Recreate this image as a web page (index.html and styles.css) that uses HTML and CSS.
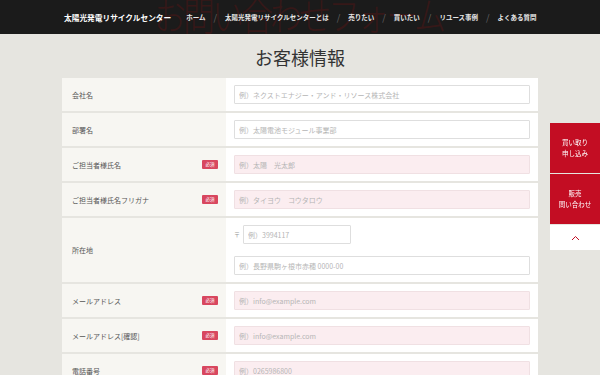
FILE: index.html
```html
<!DOCTYPE html>
<html lang="ja">
<head>
    <meta charset="UTF-8">
    <meta name="viewport" content="width=device-width, initial-scale=1.0">
    <title>お問い合わせフォーム | 太陽光発電リサイクルセンター</title>
    <link rel="stylesheet" href="styles.css">
</head>
<body>
    <div class="Header">
        <div class="bigtitle">お問い合わせフォーム</div>
        <div class="logo">太陽光発電リサイクルセンター</div>
        <ul class="nav">
            <li><a href="#">ホーム</a></li>
            <li class="sep">/</li>
            <li><a href="#">太陽光発電リサイクルセンターとは</a></li>
            <li class="sep">/</li>
            <li><a href="#">売りたい</a></li>
            <li class="sep">/</li>
            <li><a href="#">買いたい</a></li>
            <li class="sep">/</li>
            <li><a href="#">リユース事例</a></li>
            <li class="sep">/</li>
            <li><a href="#">よくある質問</a></li>
        </ul>
    </div>

    <h2 class="ttl">お客様情報</h2>

    <div class="form">
        <div class="row">
            <div class="lbl">会社名</div>
            <div class="cell"><input type="text" placeholder="例）ネクストエナジー・アンド・リソース株式会社"></div>
        </div>
        <div class="row">
            <div class="lbl">部署名</div>
            <div class="cell"><input type="text" placeholder="例）太陽電池モジュール事業部"></div>
        </div>
        <div class="row">
            <div class="lbl">ご担当者様氏名<span class="must">必須</span></div>
            <div class="cell"><input type="text" class="req" placeholder="例）太陽　光太郎"></div>
        </div>
        <div class="row">
            <div class="lbl">ご担当者様氏名フリガナ<span class="must">必須</span></div>
            <div class="cell"><input type="text" class="req" placeholder="例）タイヨウ　コウタロウ"></div>
        </div>
        <div class="row">
            <div class="lbl">所在地</div>
            <div class="cell cell-addr">
                <div class="zip"><span class="yubin">〒</span><input type="text" class="zipin" placeholder="例）3994117"></div>
                <input type="text" placeholder="例）長野県駒ヶ根市赤穂 0000-00">
            </div>
        </div>
        <div class="row">
            <div class="lbl">メールアドレス<span class="must">必須</span></div>
            <div class="cell"><input type="text" class="req" placeholder="例）info@example.com"></div>
        </div>
        <div class="row">
            <div class="lbl">メールアドレス[確認]<span class="must">必須</span></div>
            <div class="cell"><input type="text" class="req" placeholder="例）info@example.com"></div>
        </div>
        <div class="row">
            <div class="lbl">電話番号<span class="must">必須</span></div>
            <div class="cell"><input type="text" class="req" placeholder="例）0265986800"></div>
        </div>
    </div>

    <div class="side">
        <a href="#" class="side-btn">買い取り<br>申し込み</a>
        <a href="#" class="side-btn">販売<br>問い合わせ</a>
        <a href="#" class="side-top">
            <svg width="9" height="6" viewBox="0 0 9 6"><path d="M1 5 L4.5 1.5 L8 5" fill="none" stroke="#c30d23" stroke-width="1"/></svg>
        </a>
    </div>
</body>
</html>
```

FILE: styles.css
```css
body{
    margin: 0;
    background-color: #e6e5e0;
    font-family: "Open Sans", "Noto Sans CJK JP", sans-serif;
    color: #444;
}
.Header{
    position: relative;
    height: 34px;
    background-color: #1b1b1b;
    display: flex;
    align-items: center;
    padding-left: 64px;
    overflow: hidden;
}
/* 背景の大きい見出し */
.bigtitle{
    position: absolute;
    left: 154px;
    top: 0;
    font-family: "Noto Sans CJK JP", serif;
    font-weight: 300;
    font-size: 32px;
    line-height: 32px;
    letter-spacing: -3px;
    color: #361818;
    white-space: nowrap;
    transform: scaleY(1.2);
    transform-origin: left bottom;
}
.logo{
    position: relative;
    font-family: "Noto Sans CJK JP", sans-serif;
    font-size: 7.7px;
    font-weight: bold;
    color: #fff;
    white-space: nowrap;
}
.nav{
    position: relative;
    list-style: none;
    margin: 0 0 0 15px;
    padding: 0;
    display: flex;
    align-items: center;
    font-family: "Noto Sans CJK JP", sans-serif;
    font-size: 6.5px;
    font-weight: bold;
    white-space: nowrap;
}
.nav a{
    color: #e8e8e8;
    text-decoration: none;
}
.nav .sep{
    color: #666;
    font-size: 9px;
    font-weight: normal;
    margin: 0 8px;
}
.ttl{
    margin: 0;
    padding: 11px 0 9px;
    text-align: center;
    font-family: "Noto Sans CJK JP", sans-serif;
    font-weight: normal;
    font-size: 18px;
    line-height: 24px;
    color: #333;
}
.form{
    width: 476px;
    margin: 0 auto;
}
.row{
    display: flex;
    margin-bottom: 2px;
    background: #fff;
}
.lbl{
    width: 146px;
    flex: none;
    display: flex;
    align-items: center;
    justify-content: space-between;
    padding: 0 8px 0 10px;
    background: #f7f6f2;
    font-family: "Noto Sans CJK JP", sans-serif;
    font-size: 7px;
    color: #555;
}
.must{
    display: inline-block;
    width: 16px;
    height: 9px;
    line-height: 9px;
    text-align: center;
    background: #d8475f;
    color: #fff;
    font-size: 4.5px;
    border-radius: 1px;
}
.cell{
    flex: 1;
    padding: 7px 8px;
}
.cell-addr{
    padding: 7px 8px 7px;
}
.zip{
    display: flex;
    align-items: center;
    margin-bottom: 12px;
}
.yubin{
    font-size: 6px;
    color: #999;
    width: 9px;
}
input[type="text"]{
    display: block;
    box-sizing: border-box;
    width: 100%;
    height: 19px;
    margin: 0;
    padding: 0 4px;
    border: 1px solid #dedede;
    border-radius: 1px;
    background: #fff;
    font-family: "Noto Sans CJK JP", sans-serif;
    font-size: 7px;
    outline: none;
}
input::placeholder{
    color: #b5b5b5;
}
input.req{
    background: #fbedf0;
    border-color: #f0e0e3;
}
.zip input.zipin{
    width: 108px;
}
/* 右側の固定ボタン */
.side{
    position: fixed;
    right: 0;
    top: 123px;
    width: 50px;
}
.side-btn{
    display: flex;
    align-items: center;
    justify-content: center;
    height: 50px;
    margin-bottom: 1px;
    background: #c30d23;
    color: #fff;
    text-align: center;
    text-decoration: none;
    font-family: "Noto Sans CJK JP", sans-serif;
    font-size: 6.5px;
    line-height: 11px;
}
.side-top{
    display: flex;
    align-items: center;
    justify-content: center;
    height: 25px;
    background: #fff;
}
```
